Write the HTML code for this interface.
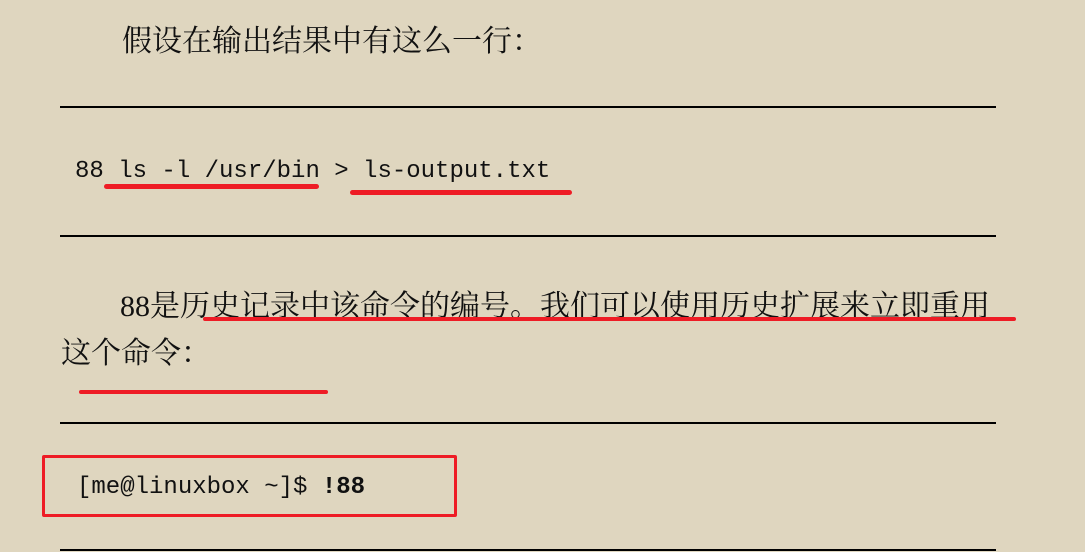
<!DOCTYPE html>
<html><head><meta charset="utf-8"><style>
body{margin:0;width:1085px;height:552px;background:#dfd6bf;position:relative;overflow:hidden}
.t{position:absolute;font-family:"Noto Serif CJK SC","Liberation Serif",serif;font-size:30px;color:#111;white-space:nowrap;line-height:1}
.t .n{font-family:"Liberation Serif",serif}
.m{position:absolute;font-family:"Liberation Mono",monospace;font-size:24px;color:#111;white-space:nowrap;line-height:1}
.r{position:absolute;left:60px;width:936px;height:2px;background:#000}
.red{position:absolute;height:5px;background:#ee1c25;border-radius:3px}
</style></head><body>
<div class="t" style="left:122px;top:23px">假设在输出结果中有这么一行：</div>
<div class="r" style="top:106px"></div>
<div class="m" style="left:75px;top:160px">88 ls -l /usr/bin &gt; ls-output.txt</div>
<div class="red" style="left:104px;top:184px;width:215px"></div>
<div class="red" style="left:350px;top:190px;width:222px"></div>
<div class="r" style="top:235px"></div>
<div class="t" style="left:120px;top:288px"><span class="n">88</span>是历史记录中该命令的编号。我们可以使用历史扩展来立即重用</div>
<div class="red" style="left:203px;top:317px;width:813px;height:4px"></div>
<div class="t" style="left:61px;top:335px">这个命令：</div>
<div class="red" style="left:79px;top:390px;width:249px;height:4px"></div>
<div class="r" style="top:422px"></div>
<div style="position:absolute;left:42px;top:455px;width:409px;height:56px;border:3px solid #ee1c25;border-radius:2px"></div>
<div class="m" style="left:77px;top:476px">[me@linuxbox ~]$ <b>!88</b></div>
<div class="r" style="top:549px"></div>
</body></html>
